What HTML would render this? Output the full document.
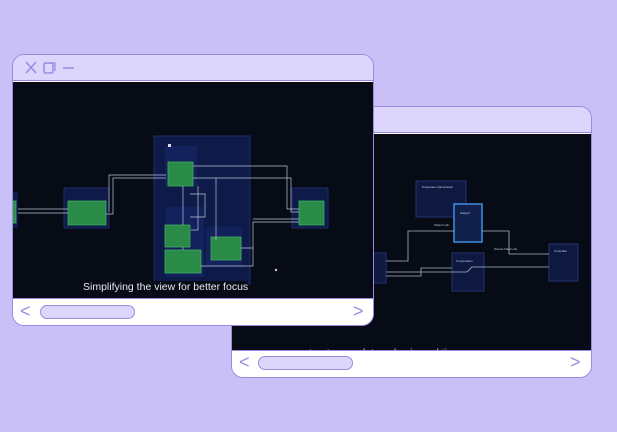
<!DOCTYPE html>
<html><head><meta charset="utf-8"><style>
*{margin:0;padding:0;box-sizing:border-box}
body{width:617px;height:432px;background:#c9c0f7;position:relative;overflow:hidden;font-family:"Liberation Sans",sans-serif}
.win{position:absolute;border:1.5px solid #9a8be0;border-radius:12px;overflow:hidden;background:#fff}
.tb{position:absolute;left:0;right:0;top:0;height:26px;background:#dcd5fc;border-bottom:1.5px solid #9a8be0}
.scr{position:absolute;left:0;right:0;background:#070b16}
.bot{position:absolute;left:0;right:0;bottom:0;background:#fff;border-top:1.5px solid #9a8be0}
.pill{position:absolute;height:14px;border:1.5px solid #9a8be0;background:#dcd5fc;border-radius:8px}
.ar{position:absolute;color:#9a8be0;font-size:18px;line-height:18px}
</style></head><body>

<!-- window 2 (back) -->
<div class="win" style="left:231px;top:106px;width:361px;height:272px">
 <div class="tb"></div>
 <div class="scr" style="top:27px;height:218px">
  <svg width="361" height="218" style="position:absolute;left:0;top:0">
   <g fill="#0e1840" stroke="#22336f" stroke-width="1">
    <rect x="184" y="47" width="50" height="36"/>
    <rect x="220" y="119" width="32" height="38"/>
    <rect x="317" y="110" width="29" height="37"/>
    <rect x="138" y="119" width="16" height="30"/>
   </g>
   <rect x="222" y="70" width="28" height="38" fill="#12204c" stroke="#3f8fe0" stroke-width="1.5"/>
   <g fill="none" stroke="#a8b4c8" stroke-width="0.8">
    <path d="M154 127 H176 V97 H222"/>
    <path d="M250 97 H277 V120 H317"/>
    <path d="M154 138 H235 L240 133 H317"/>
    <path d="M154 142 H189 V134 H220"/>
   </g>
   <g fill="#c8d0e0" font-size="3">
    <text x="190" y="54">Properties Optimization</text>
    <text x="228" y="80">Subject</text>
    <text x="224" y="128">Composition</text>
    <text x="322" y="118">Controller</text>
    <text x="202" y="92">Object Link</text>
    <text x="262" y="116">Sensor Data Link</text>
   </g>
  </svg>
  <div style="position:absolute;left:72px;top:213px;color:#c8ccd8;font-size:10.5px;white-space:nowrap">structure updates also in real time</div>
 </div>
 <div class="bot" style="height:27px">
  <div class="ar" style="left:7px;top:2px">&lt;</div>
  <div class="pill" style="left:26px;top:5px;width:95px"></div>
  <div class="ar" style="left:338px;top:2px">&gt;</div>
 </div>
</div>

<!-- window 1 (front) -->
<div class="win" style="left:12px;top:54px;width:362px;height:272px">
 <div class="tb">
  <svg width="70" height="26" style="position:absolute;left:0;top:0">
   <path d="M13 7 L23 18 M23 7 L13 18" stroke="#9a8be0" stroke-width="1.5" fill="none"/>
   <rect x="31" y="8" width="9" height="10" rx="1.5" fill="none" stroke="#9a8be0" stroke-width="1.5"/>
   <path d="M34 8 H42 V16" stroke="#9a8be0" stroke-width="1.2" fill="none"/>
   <path d="M50 13 H61" stroke="#9a8be0" stroke-width="1.5"/>
  </svg>
 </div>
 <div class="scr" style="top:27px;height:218px">
  <svg width="362" height="218" style="position:absolute;left:0;top:0">
   <rect x="141" y="54" width="96" height="148" fill="#0e1a48" stroke="#1b2d6a" stroke-width="1"/>
   <rect x="152" y="64" width="32" height="40" fill="#13225c"/>
   <rect x="153" y="125" width="38" height="70" fill="#13225c"/>
   <rect x="193" y="145" width="36" height="40" fill="#13225c"/>
   <rect x="51" y="106" width="45" height="40" fill="#0e1a48" stroke="#1b2d6a"/>
   <rect x="279" y="106" width="36" height="40" fill="#0e1a48" stroke="#1b2d6a"/>
   <rect x="0" y="110" width="5" height="36" fill="#0e1a48"/>
   <g fill="#2a8a48" stroke="#3fae5f" stroke-width="0.8">
    <rect x="155" y="80" width="25" height="24"/>
    <rect x="55" y="119" width="38" height="24"/>
    <rect x="286" y="119" width="25" height="24"/>
    <rect x="152" y="143" width="25" height="22"/>
    <rect x="152" y="168" width="36" height="23"/>
    <rect x="198" y="155" width="30" height="23"/>
    <rect x="0" y="119" width="3" height="22"/>
   </g>
   <g fill="none" stroke="#b8c2d2" stroke-width="0.7">
    <path d="M5 127 H55 M5 131 H55"/>
    <path d="M93 132 H100 V96 H153"/>
    <path d="M96 130 V93 H153"/>
    <path d="M180 84 H274 V127 H286"/>
    <path d="M180 96 H278 V130 H286"/>
    <path d="M185 104 V148 H178"/>
    <path d="M177 112 H192 V135 H177"/>
    <path d="M203 96 V158"/>
    <path d="M228 166 H240 M188 184 H240 V140 H286 M240 137 H286"/>
    <path d="M170 104 V143 M170 165 V168"/>
   </g>
   <rect x="155" y="62" width="3" height="3" fill="#dde"/>
   <circle cx="263" cy="188" r="1.2" fill="#ccd"/>
  </svg>
  <div style="position:absolute;left:70px;top:199px;color:#e6e8f0;font-size:10.5px;background:#070b16;white-space:nowrap">Simplifying the view for better focus</div>
 </div>
 <div class="bot" style="height:27px">
  <div class="ar" style="left:7px;top:3px">&lt;</div>
  <div class="pill" style="left:27px;top:6px;width:95px"></div>
  <div class="ar" style="left:340px;top:3px">&gt;</div>
 </div>
</div>
</body></html>
